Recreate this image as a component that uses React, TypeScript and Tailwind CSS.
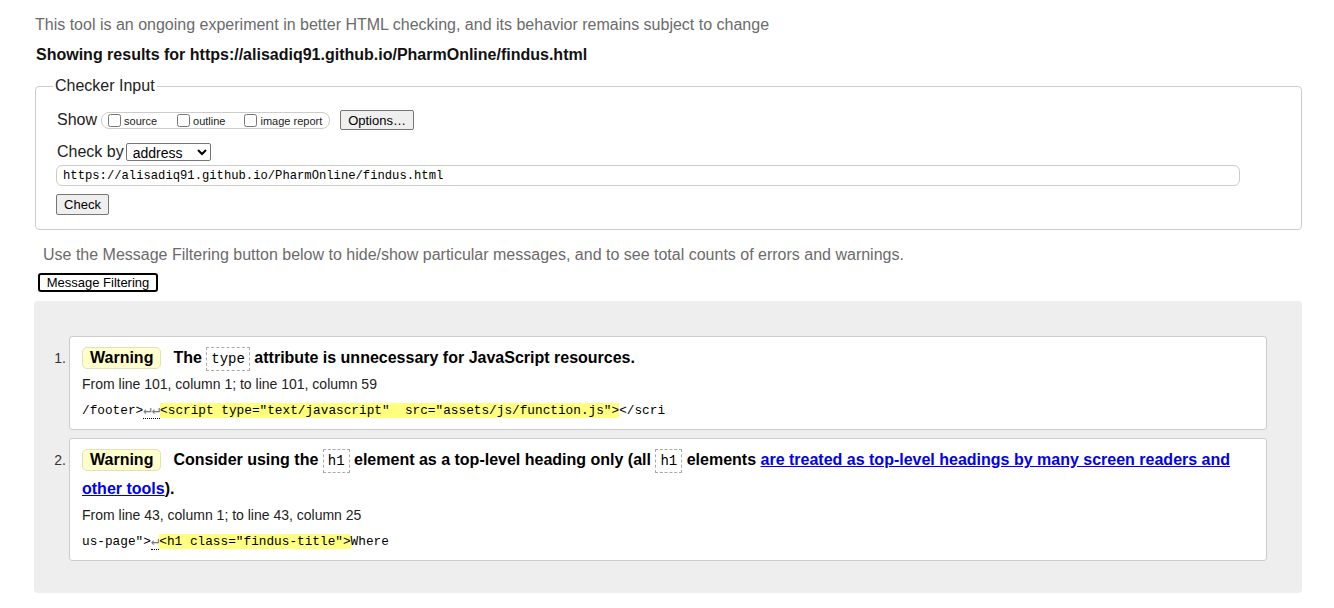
import React from "react";

const mono = "font-['Liberation_Mono','DejaVu_Sans_Mono',monospace]";

function CodeBox({ children }: { children: React.ReactNode }) {
  return (
    <code
      className={`${mono} font-normal text-[14px] px-[4px] py-[3px] border border-dashed border-[#aaa] bg-white`}
    >
      {children}
    </code>
  );
}

function Badge() {
  return (
    <span className="inline-block bg-[#ffffcc] border border-[#e2e2b8] rounded-[5px] px-[7px] leading-[20px] mr-[12px] text-black">
      Warning
    </span>
  );
}

function Arrows({ n }: { n: number }) {
  return (
    <span className="text-[#777] text-[14px] border-b border-dotted border-black">
      {"↵".repeat(n)}
    </span>
  );
}

export default function App() {
  return (
    <div className="min-h-[608px] bg-white text-black font-['Liberation_Sans',Arial,sans-serif] pl-[34px] pr-[32px]">
      <p className="pt-[15px] pl-[1px] text-[16px] leading-[20px] text-[#6b6b6b]">
        This tool is an ongoing experiment in better HTML checking, and its behavior remains subject to change
      </p>
      <p className="mt-[10px] pl-[2px] text-[16px] leading-[20px] font-bold text-[#111]">
        Showing results for https://alisadiq91.github.io/PharmOnline/findus.html
      </p>

      <fieldset className="mt-[11px] ml-[1px] border border-[#ccc] rounded-[4px] pl-[17px] pb-[14px]">
        <legend className="px-[2px] text-[16px] leading-[20px] text-[#222]">Checker Input</legend>
        <div className="pl-[4px]">
          <div className="mt-[13px] h-[22px] flex items-center">
            <span className="text-[16px] text-[#222]">Show</span>
            <div className="ml-[4px] h-[17px] w-[229px] border border-[#ccc] rounded-[8px] flex items-center pl-[6px] text-[11px] text-[#222]">
              <input type="checkbox" className="m-0 w-[13px] h-[13px]" />
              <span className="ml-[3px] mt-[3px]">source</span>
              <input type="checkbox" className="m-0 ml-[20px] w-[13px] h-[13px]" />
              <span className="ml-[3px] mt-[3px]">outline</span>
              <input type="checkbox" className="m-0 ml-[19px] w-[13px] h-[13px]" />
              <span className="ml-[3px] mt-[3px]">image report</span>
            </div>
            <button className="ml-[10px] h-[20px] w-[74px] bg-[#efefef] border border-[#767676] rounded-[2px] text-[13px] text-black">
              Options…
            </button>
          </div>
          <div className="mt-[11px] h-[20px] flex items-center">
            <span className="text-[16px] text-[#222]">Check by</span>
            <select className="ml-[2px] h-[18px] w-[85px] border border-[#767676] rounded-[2px] text-[14px] text-black bg-white pl-[2px]">
              <option>address</option>
            </select>
          </div>
          <input
            readOnly
            defaultValue="https://alisadiq91.github.io/PharmOnline/findus.html"
            className={`${mono} block mt-[3px] -ml-[1px] h-[21px] w-[1184px] border border-[#ccc] rounded-[6px] pl-[6px] text-[12.2px] text-black bg-white outline-none`}
          />
          <button className="block mt-[8px] -ml-[1px] h-[21px] w-[53px] bg-[#efefef] border border-[#767676] rounded-[2px] text-[13px] text-black">
            Check
          </button>
        </div>
      </fieldset>

      <p className="mt-[15px] pl-[9px] text-[16px] leading-[20px] text-[#6b6b6b]">
        Use the Message Filtering button below to hide/show particular messages, and to see total counts of errors and warnings.
      </p>
      <button className="block mt-[8px] ml-[4px] h-[19px] w-[120px] border-2 border-black rounded-[3px] bg-white text-[13px] leading-none text-black">
        Message Filtering
      </button>

      <div className="mt-[9px] bg-[#eeeeee] rounded-[4px] pt-[35px] pb-[32px] pr-[35px] flex flex-col gap-[8px]">
        <div className="flex">
          <div className="w-[35px] shrink-0 text-right pr-[3px] pt-[8px] text-[14px] leading-[28px] text-[#333]">1.</div>
          <div className="flex-1 bg-white border border-[#ccc] rounded-[3px] pl-[12px] pt-[7px] pb-[8px] pr-[13px]">
            <p className="text-[16px] font-bold leading-[28px] text-black">
              <Badge />
              The <CodeBox>type</CodeBox> attribute is unnecessary for JavaScript resources.
            </p>
            <p className="mt-[1px] text-[14px] leading-[20px] text-[#222]">
              From line 101, column 1; to line 101, column 59
            </p>
            <p className={`${mono} mt-[6px] text-[12.75px] leading-[20px] text-black whitespace-pre`}>
              /footer&gt;<Arrows n={2} />
              <span className="bg-[#ffff80]">{'<script type="text/javascript"  src="assets/js/function.js">'}</span>
              {"</scri"}
            </p>
          </div>
        </div>

        <div className="flex">
          <div className="w-[35px] shrink-0 text-right pr-[3px] pt-[8px] text-[14px] leading-[28px] text-[#333]">2.</div>
          <div className="flex-1 bg-white border border-[#ccc] rounded-[3px] pl-[12px] pt-[7px] pb-[8px] pr-[13px]">
            <p className="text-[16px] font-bold leading-[28px] text-black">
              <Badge />
              Consider using the <CodeBox>h1</CodeBox> element as a top-level heading only (all{" "}
              <CodeBox>h1</CodeBox> elements{" "}
              <a href="#" className="text-[#0000ee] underline">
                are treated as top-level headings by many screen readers and other tools
              </a>
              ).
            </p>
            <p className="mt-[2px] text-[14px] leading-[20px] text-[#222]">
              From line 43, column 1; to line 43, column 25
            </p>
            <p className={`${mono} mt-[6px] text-[12.75px] leading-[20px] text-black whitespace-pre`}>
              us-page"&gt;<Arrows n={1} />
              <span className="bg-[#ffff80]">{'<h1 class="findus-title">'}</span>
              Where
            </p>
          </div>
        </div>
      </div>
    </div>
  );
}
